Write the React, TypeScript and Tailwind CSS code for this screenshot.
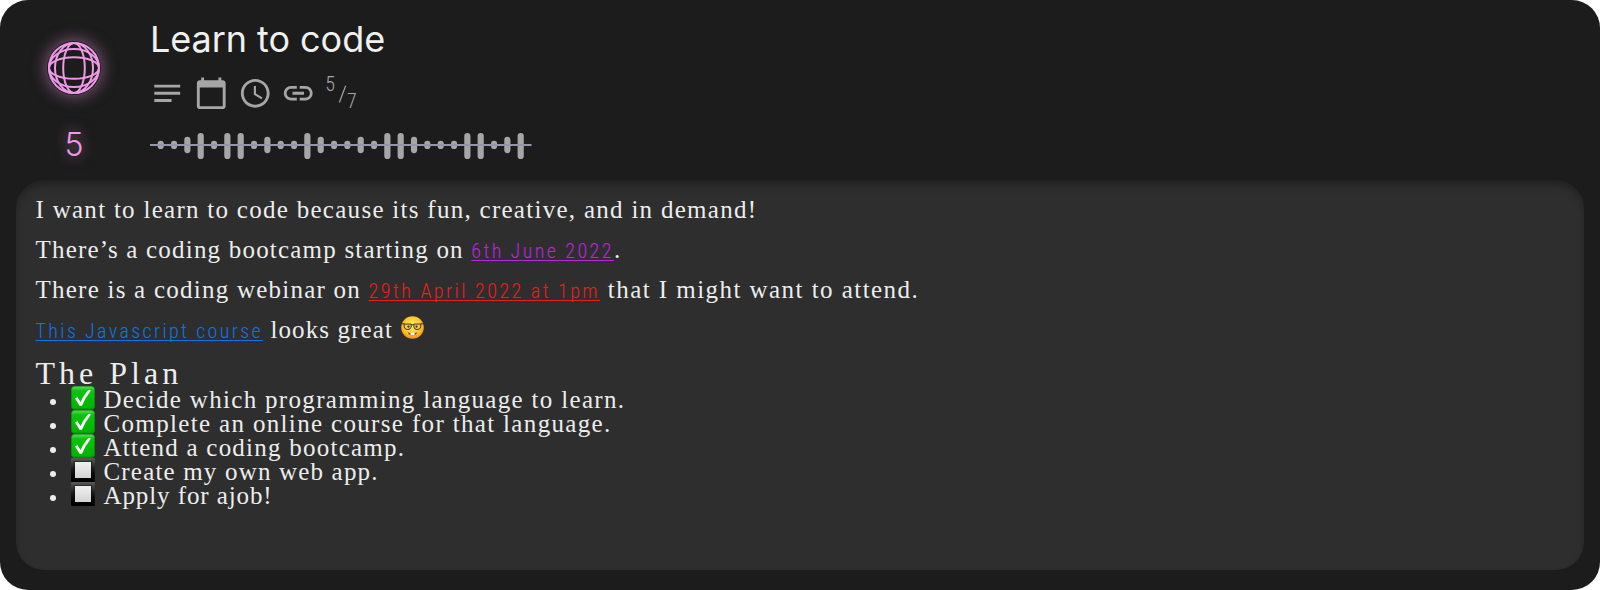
import type { ReactNode } from "react";

const LEVELS = [
  1, 1, 2, 3, 1, 3, 3, 1, 2, 1, 1, 3, 2, 1, 1, 2, 1, 3, 3, 2, 1, 1, 1, 3, 3, 1, 2, 3,
];
const LEVEL_SIZE: Record<number, { y: number; h: number }> = {
  1: { y: 10.8, h: 8.2 },
  2: { y: 6.8, h: 16.4 },
  3: { y: 3, h: 26 },
};

function Globe() {
  return (
    <svg
      viewBox="0 0 54 54"
      className="size-[54px] overflow-visible rounded-full shadow-[0_0_16px_1px_rgba(238,153,230,0.5)]"
      fill="none"
      stroke="#ee99e6"
      strokeWidth="2"
    >
      <circle cx="27" cy="27" r="25" fill="#1c1c1c" />
      <ellipse cx="27" cy="27" rx="10.8" ry="25" />
      <ellipse cx="27" cy="27" rx="19" ry="25" />
      <ellipse cx="27" cy="27" rx="25" ry="10.8" />
      <ellipse cx="27" cy="27" rx="25" ry="19" />
    </svg>
  );
}

function Icon({ d }: { d: string }) {
  return (
    <svg viewBox="0 0 24 24" className="size-[34.5px]" fill="#a6a6a6">
      <path d={d} />
    </svg>
  );
}

function Wave() {
  return (
    <svg viewBox="0 0 382 32" className="h-8 w-[382px]">
      {LEVELS.map((level, i) => (
        <rect
          key={i}
          x={7.6 + i * 13.333}
          y={LEVEL_SIZE[level].y}
          width="6.2"
          height={LEVEL_SIZE[level].h}
          rx="3.1"
          fill="#a6a6a6"
        />
      ))}
      <rect x="0" y="14" width="381.5" height="2" fill="#9296a8" />
    </svg>
  );
}

function NerdFace() {
  return (
    <svg viewBox="0 0 24 24" className="size-[23px]" role="img" aria-label="nerd face">
      <defs>
        <radialGradient id="face" cx="50%" cy="42%" r="60%">
          <stop offset="0" stopColor="#fff06a" />
          <stop offset="0.6" stopColor="#ffc933" />
          <stop offset="1" stopColor="#ee8a12" />
        </radialGradient>
      </defs>
      <circle cx="12" cy="12" r="11.8" fill="url(#face)" />
      <path d="M7 17Q12 19.4 17 17Q15.8 20.4 12 20.4T7 17Z" fill="#8a5216" />
      <path d="M9.9 17.6h4.2v2.4h-4.2z" fill="#fff" />
      <g fill="#f3cf45" stroke="#3a301a" strokeWidth="1">
        <path d="M3.4 8.4h7.2v3q-.6 2.8-3.6 2.8t-3.6-2.8z" />
        <path d="M13.4 8.4h7.2v3q-.6 2.8-3.6 2.8t-3.6-2.8z" />
        <path d="M.8 8.2h3M10.6 9.2h3M20.4 8.2h2.8" fill="none" />
      </g>
      <circle cx="7.8" cy="11" r="1.2" fill="#4a2b10" />
      <circle cx="16.2" cy="11" r="1.2" fill="#4a2b10" />
    </svg>
  );
}

function Check() {
  return (
    <svg viewBox="0 0 24 24" className="size-6 shrink-0" role="img" aria-label="done">
      <defs>
        <linearGradient id="done" x1="0" y1="0" x2="0" y2="1">
          <stop offset="0" stopColor="#5fdc5f" />
          <stop offset="0.2" stopColor="#0bc40e" />
          <stop offset="0.9" stopColor="#00b400" />
          <stop offset="1" stopColor="#008e00" />
        </linearGradient>
      </defs>
      <rect x="0.3" y="0.2" width="23.4" height="23.5" rx="3.6" fill="url(#done)" stroke="#078a0b" strokeWidth="0.5" />
      <path d="M4 12.4L6.4 11L9.6 16Q12.8 8.4 17.8 3.8L20 4.4Q14.2 11.5 11 19.7H8.6z" fill="#fff" />
    </svg>
  );
}

function Box() {
  return (
    <svg viewBox="0 0 24 24" className="size-6 shrink-0" role="img" aria-label="to do">
      <defs>
        <linearGradient id="frame" x1="0" y1="0" x2="0" y2="1">
          <stop offset="0" stopColor="#5a5a5a" />
          <stop offset="0.45" stopColor="#1c1c1c" />
          <stop offset="0.8" stopColor="#000" />
        </linearGradient>
        <linearGradient id="inside" x1="0" y1="0" x2="0" y2="1">
          <stop offset="0" stopColor="#f0f0f0" />
          <stop offset="1" stopColor="#d3d3d3" />
        </linearGradient>
      </defs>
      <rect width="24" height="24" rx="1" fill="url(#frame)" />
      <rect x="2.8" y="3" width="18.4" height="18.4" fill="#000" opacity="0.35" />
      <rect x="4" y="4" width="16" height="16" fill="url(#inside)" />
    </svg>
  );
}

function Item({ done, children }: { done?: boolean; children: ReactNode }) {
  return (
    <li className="flex h-6 items-start">
      <span className="mt-[13px] mr-[15px] ml-[14px] size-[6px] rounded-full bg-[#ededed]" />
      {done ? <Check /> : <Box />}
      <span className="ml-[9px] pt-[1.5px] leading-6 whitespace-pre">{children}</span>
    </li>
  );
}

const LINK =
  "font-['Roboto_Condensed','Roboto',sans-serif] font-light text-[20px] underline decoration-1 underline-offset-[2px] [text-decoration-skip-ink:none]";

export default function App() {
  return (
    <div className="bg-white">
      <div className="flex h-[590px] w-[1600px] flex-col rounded-[28px] bg-[#1c1c1c] px-4 pb-5">
        <header className="flex h-[180px] shrink-0">
          <div className="flex w-[116px] flex-col items-center pt-[41px]">
            <Globe />
            <span className="mt-[30px] font-['Inter',sans-serif] text-[32px] leading-10 font-light text-[#ee99e6] [text-shadow:0_0_14px_rgba(238,153,230,0.6)]">
              5
            </span>
          </div>
          <div className="flex flex-col pt-[17px] pl-[18px]">
            <h1 className="font-['Inter',sans-serif] text-[36px] leading-[44px] font-normal tracking-[-0.05px] text-[#f0f0ee]">
              Learn to code
            </h1>
            <div className="mt-[14.8px] flex h-[34px] items-center gap-[9.3px]">
              <Icon d="M3 18h12v-2H3v2zM3 6v2h18V6H3zm0 7h18v-2H3v2z" />
              <Icon d="M20 3h-1V1h-2v2H7V1H5v2H4c-1.1 0-2 .9-2 2v16c0 1.1.9 2 2 2h16c1.1 0 2-.9 2-2V5c0-1.1-.9-2-2-2zm0 18H4V8h16v13z" />
              <Icon d="M11.99 2C6.47 2 2 6.48 2 12s4.47 10 9.99 10C17.52 22 22 17.52 22 12S17.52 2 11.99 2zM12 20c-4.42 0-8-3.58-8-8s3.58-8 8-8 8 3.58 8 8-3.58 8-8 8zm.5-13H11v6l5.25 3.15.75-1.23-4.5-2.67z" />
              <Icon d="M3.9 12c0-1.71 1.39-3.1 3.1-3.1h4V7H7c-2.76 0-5 2.24-5 5s2.24 5 5 5h4v-1.9H7c-1.71 0-3.1-1.39-3.1-3.1zM8 13h8v-2H8v2zm9-6h-4v1.9h4c1.71 0 3.1 1.39 3.1 3.1s-1.39 3.1-3.1 3.1h-4V17h4c2.76 0 5-2.24 5-5s-2.24-5-5-5z" />
              <div className="flex h-[34px] items-start font-['Roboto_Condensed','Roboto',sans-serif] text-[20px] leading-5 font-light text-[#a6a6a6]">
                <span className="-mt-[2px]">5</span>
                <svg viewBox="0 0 10 20" className="mt-2 ml-[3px] h-5 w-[9px]" stroke="#a6a6a6" strokeWidth="1.3">
                  <path d="M1.5 19.5L8.5 0.8" />
                </svg>
                <span className="mt-[15.5px]">7</span>
              </div>
            </div>
            <div className="mt-[20.2px]">
              <Wave />
            </div>
          </div>
        </header>

        <main className="h-[390px] rounded-[28px] bg-[#2e2e2e] pt-[10px] pl-[19.5px] font-['Liberation_Serif',serif] text-[25px] text-[#ededed] shadow-[inset_0_6px_10px_-2px_rgba(0,0,0,0.34)]">
          <p className="h-10 leading-10 tracking-[1.28px] whitespace-pre">
            I want to learn to code because its fun, creative, and in demand!
          </p>
          <p className="h-10 leading-10 tracking-[1.2px] whitespace-pre">
            There’s a coding bootcamp starting on{" "}
            <a className={LINK + " tracking-[2.42px] text-[#bd25e0]"}>6th June 2022</a>.
          </p>
          <p className="h-10 leading-10 tracking-[1.24px] whitespace-pre">
            There is a coding webinar on{" "}
            <a className={LINK + " tracking-[2.48px] text-[#ee1c1c]"}>29th April 2022 at 1pm</a>
            <span className="tracking-[1.45px]"> that I might want to attend.</span>
          </p>
          <div className="flex h-10 leading-10 tracking-[1.12px] whitespace-pre">
            <p>
              <a className={LINK + " tracking-[2.37px] text-[#0f74e8]"}>This Javascript course</a> looks great{" "}
            </p>
            <span className="mt-[6px] ml-px">
              <NerdFace />
            </span>
          </div>
          <h2 className="h-9 pt-2 text-[32px] leading-[30px] tracking-[4px]">The Plan</h2>
          <ul>
            <Item done>
              <span className="tracking-[1.32px]">Decide which programming language to learn.</span>
            </Item>
            <Item done>
              <span className="tracking-[1.34px]">Complete an online course for that language.</span>
            </Item>
            <Item done>
              <span className="tracking-[1.24px]">Attend a coding bootcamp.</span>
            </Item>
            <Item>
              <span className="tracking-[1.18px]">Create my own web app.</span>
            </Item>
            <Item>
              <span className="tracking-[0.9px]">Apply for ajob!</span>
            </Item>
          </ul>
        </main>
      </div>
    </div>
  );
}
